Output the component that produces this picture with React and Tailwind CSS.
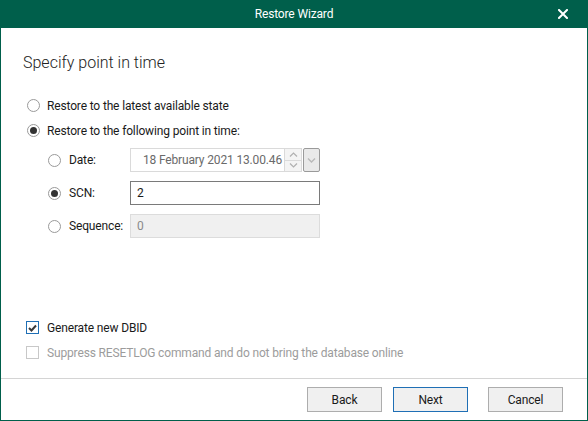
import React from "react";

const font = { fontFamily: 'Roboto, "Noto Sans", sans-serif' };

function Radio({ checked }) {
  return (
    <span className="flex h-[13px] w-[13px] shrink-0 items-center justify-center rounded-full border border-[#9a9a9a] bg-white">
      {checked && <span className="h-[7px] w-[7px] rounded-full bg-[#333333]" />}
    </span>
  );
}

export default function App() {
  return (
    <div
      className="flex h-[421px] w-[588px] flex-col border-x border-b border-[#005f4b] bg-white text-[12px] tracking-[-0.15px] text-[#1a1a1a]"
      style={font}
    >
      <div className="relative -mx-px flex h-[28px] shrink-0 items-center justify-center bg-[#005f4b] text-white">
        <span className="leading-none">Restore Wizard</span>
        <svg className="absolute right-[20px] top-[9px]" width="10" height="10" viewBox="0 0 10 10">
          <path d="M1 1L9 9M9 1L1 9" stroke="white" strokeWidth="2" strokeLinecap="square" />
        </svg>
      </div>

      <div className="flex flex-1 flex-col pl-[22px]">
        <div className="mt-[25px] text-[16px] font-light leading-[20px] tracking-normal text-[#222]">Specify point in time</div>

        <div className="mt-[20px] flex flex-col">
          <div className="flex h-[25px] items-center gap-[7px] pl-[4px]">
            <Radio />
            <span>Restore to the latest available state</span>
          </div>
          <div className="flex h-[25px] items-center gap-[7px] pl-[4px]">
            <Radio checked />
            <span>Restore to the following point in time:</span>
          </div>
        </div>

        <div className="mt-[5px] grid grid-cols-[82px_190px] gap-y-[9px] pl-[25px]">
          <div className="flex h-[24px] items-center gap-[8px]">
            <Radio />
            <span>Date:</span>
          </div>
          <div className="flex h-[24px]">
            <div className="flex flex-1 items-center justify-end border border-[#dadada] pr-[2px] text-[#6a6a6a]">
              18 February 2021 13.00.46
            </div>
            <div className="flex w-[17px] flex-col border-y border-r border-[#dadada] bg-[#f4f4f4]">
              <div className="flex flex-1 items-center justify-center border-b border-[#dadada]">
                <svg width="9" height="5" viewBox="0 0 9 5"><path d="M1 4.5L4.5 1L8 4.5" fill="none" stroke="#b0b0b0" strokeWidth="1.2" /></svg>
              </div>
              <div className="flex flex-1 items-center justify-center">
                <svg width="9" height="5" viewBox="0 0 9 5"><path d="M1 0.5L4.5 4L8 0.5" fill="none" stroke="#b0b0b0" strokeWidth="1.2" /></svg>
              </div>
            </div>
            <div className="ml-px flex w-[17px] items-center justify-center rounded-[2px] border border-[#9a9a9a] bg-[#e9e9e9]">
              <svg width="9" height="5" viewBox="0 0 9 5"><path d="M1 0.5L4.5 4L8 0.5" fill="none" stroke="#b8b8b8" strokeWidth="1.4" /></svg>
            </div>
          </div>

          <div className="flex h-[24px] items-center gap-[8px]">
            <Radio checked />
            <span>SCN:</span>
          </div>
          <div className="flex h-[24px] items-center border border-[#7a7a7a] pl-[6px]">2</div>

          <div className="flex h-[24px] items-center gap-[8px]">
            <Radio />
            <span>Sequence:</span>
          </div>
          <div className="flex h-[24px] items-center border border-[#dcdcdc] bg-[#f0f0f0] pl-[6px] text-[#8a8a8a]">0</div>
        </div>

        <div className="mt-auto mb-[13px] flex flex-col">
          <div className="flex h-[25px] items-center gap-[8px] pl-[3px]">
            <span className="flex h-[13px] w-[13px] items-center justify-center border border-[#1f6fb5] bg-white">
              <svg width="9" height="8" viewBox="0 0 9 8"><path d="M1 4L3.5 6.5L8 1.5" fill="none" stroke="#3a3a3a" strokeWidth="2" /></svg>
            </span>
            <span>Generate new DBID</span>
          </div>
          <div className="flex h-[25px] items-center gap-[8px] pl-[3px] text-[#9c9c9c]">
            <span className="h-[13px] w-[13px] border border-[#c8c8c8] bg-white" />
            <span>Suppress RESETLOG command and do not bring the database online</span>
          </div>
        </div>
      </div>

      <div className="flex h-[42px] shrink-0 items-center justify-end gap-[11px] border-t border-[#d4d4d4] pr-[24px]">
        <button className="h-[25px] w-[75px] border border-[#adadad] bg-[#f0f0f0]">Back</button>
        <button className="mr-[9px] h-[25px] w-[75px] border border-[#1f6fb5] bg-[#f0f0f0]">Next</button>
        <button className="h-[25px] w-[75px] border border-[#adadad] bg-[#f0f0f0]">Cancel</button>
      </div>
    </div>
  );
}
